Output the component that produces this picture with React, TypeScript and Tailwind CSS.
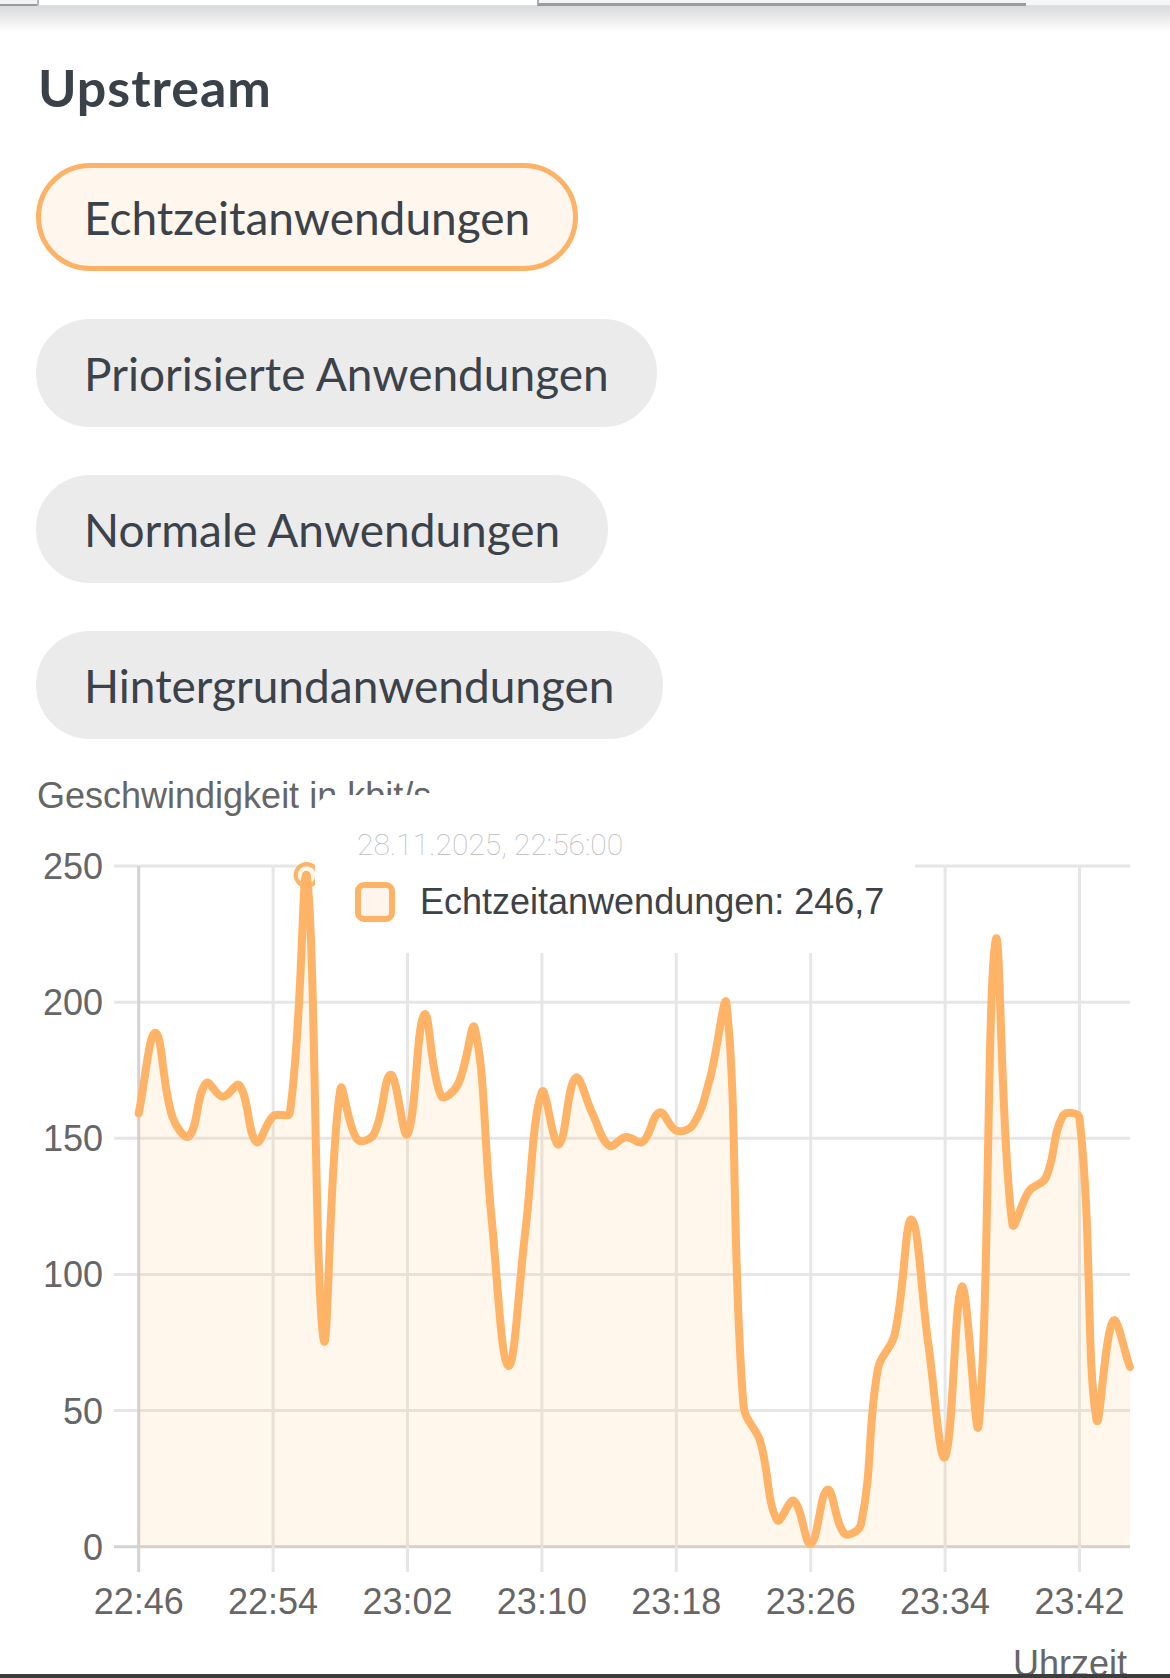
import React from "react";

const DATA = [
  159.2, 188.8, 158, 150.8, 170.2, 165.3, 169.4, 148.7, 158.1, 159.5,
  246.7, 76.3, 167.9, 149.7, 151.5, 173.3, 151.5, 195.5, 165.6, 169.8,
  190.4, 121, 66.4, 115, 167, 147.7, 172.2, 159.2, 147.3, 150.5,
  148.7, 159.5, 152.9, 155, 171.9, 198.9, 51.8, 38.6, 9.8, 16.8,
  1, 21, 4.9, 8.4, 65.3, 78, 120.1, 74.5, 33, 95.5,
  45, 222.5, 118.7, 130.7, 135.6, 158.1, 157.4, 47, 82.9, 66,
];

const X0 = 138.7;
const DX = 16.8;
const Y0 = 1546.7;
const KY = 2.7227;
const TOP = 866;
const RIGHT = 1130;
const ORANGE = "#ffb366";

type P = { x: number; y: number };

function buildPaths() {
  const pts: P[] = DATA.map((v, i) => ({ x: X0 + i * DX, y: Y0 - v * KY }));
  const clampY = (y: number) => Math.max(TOP, Math.min(Y0, y));
  const cps = pts.map((cur, i) => {
    const prev = pts[i - 1] ?? cur;
    const next = pts[i + 1] ?? cur;
    const d01 = Math.hypot(cur.x - prev.x, cur.y - prev.y);
    const d12 = Math.hypot(next.x - cur.x, next.y - cur.y);
    let s01 = d01 / (d01 + d12);
    let s12 = d12 / (d01 + d12);
    if (!isFinite(s01)) s01 = 0;
    if (!isFinite(s12)) s12 = 0;
    const fa = 0.4 * s01;
    const fb = 0.4 * s12;
    return {
      px: cur.x - fa * (next.x - prev.x),
      py: clampY(cur.y - fa * (next.y - prev.y)),
      nx: cur.x + fb * (next.x - prev.x),
      ny: clampY(cur.y + fb * (next.y - prev.y)),
    };
  });
  let d = `M${pts[0].x.toFixed(2)},${pts[0].y.toFixed(2)}`;
  for (let i = 1; i < pts.length; i++) {
    d += ` C${cps[i - 1].nx.toFixed(2)},${cps[i - 1].ny.toFixed(2)} ${cps[i].px.toFixed(2)},${cps[i].py.toFixed(2)} ${pts[i].x.toFixed(2)},${pts[i].y.toFixed(2)}`;
  }
  const last = pts[pts.length - 1];
  const fill = `${d} L${last.x.toFixed(2)},${Y0} L${pts[0].x.toFixed(2)},${Y0} Z`;
  return { line: d, fill };
}

const X_LABELS = ["22:46", "22:54", "23:02", "23:10", "23:18", "23:26", "23:34", "23:42"];
const Y_VALUES = [0, 50, 100, 150, 200, 250];

function Chart() {
  const { line, fill } = buildPaths();
  const hx = X0 + 10 * DX;
  const hy = Y0 - 246.7 * KY;
  return (
    <svg
      width={1170}
      height={914}
      viewBox="0 760 1170 914"
      className="block font-['Liberation_Sans',Arial,sans-serif]"
    >
      <text x={37} y={808} fontSize={36} fill="#666666">
        Geschwindigkeit in kbit/s
      </text>

      {Y_VALUES.map((v) => {
        const y = Y0 - v * KY;
        return (
          <g key={v}>
            <line
              x1={114}
              x2={RIGHT}
              y1={y}
              y2={y}
              stroke={v === 0 ? "#d2d2d2" : "#e6e6e6"}
              strokeWidth={3}
            />
            <text x={103} y={y + 13} fontSize={36} fill="#666666" textAnchor="end">
              {v}
            </text>
          </g>
        );
      })}

      {X_LABELS.map((l, k) => {
        const x = X0 + 134.4 * k;
        return (
          <g key={l}>
            <line
              x1={x}
              x2={x}
              y1={TOP}
              y2={1572}
              stroke={k === 0 ? "#d2d2d2" : "#e6e6e6"}
              strokeWidth={3}
            />
            <text x={x} y={1614} fontSize={36} fill="#666666" textAnchor="middle">
              {l}
            </text>
          </g>
        );
      })}

      <text x={1127} y={1676} fontSize={36} fill="#666666" textAnchor="end">
        Uhrzeit
      </text>

      <path d={fill} fill="rgba(255,179,102,0.12)" />
      <path d={line} fill="none" stroke={ORANGE} strokeWidth={8} strokeLinejoin="round" strokeLinecap="round" />
      <circle cx={hx} cy={hy} r={11} fill="rgba(255,179,102,0.12)" stroke={ORANGE} strokeWidth={4} />

      <rect x={315} y={795} width={600} height={158} rx={18} fill="#ffffff" />
      <text x={357} y={855} fontSize={30} fill="#bcbcbc" fontFamily="Roboto, sans-serif" fontWeight={100}>
        28.11.2025, 22:56:00
      </text>
      <rect x={358} y={885} width={34} height={34} rx={6} fill="#fff5ec" stroke={ORANGE} strokeWidth={6} />
      <text x={420} y={914} fontSize={36} fill="#3c4248">
        Echtzeitanwendungen: 246,7
      </text>
    </svg>
  );
}

const BUTTONS = [
  { label: "Echtzeitanwendungen", active: true },
  { label: "Priorisierte Anwendungen", active: false },
  { label: "Normale Anwendungen", active: false },
  { label: "Hintergrundanwendungen", active: false },
];

export default function App() {
  return (
    <div className="w-[1170px] h-[1678px] bg-white overflow-hidden flex flex-col">
      <div className="h-[6px] flex shrink-0">
        <div className="w-[37px] bg-[#f2f2f2] border-b-[2px] border-[#9a9a9a]" />
        <div className="w-[500px] bg-white border-l-[2px] border-b-[1px] border-l-[#b5b5b5] border-b-[#dedede]" />
        <div className="w-[489px] bg-[#f4f4f4] border-l-[2px] border-b-[3px] border-l-[#b0b0b0] border-b-[#9c9c9c]" />
        <div className="flex-1 bg-[#f6f6f6] border-b-[1px] border-[#e2e2e2]" />
      </div>
      <div className="h-[26px] shrink-0 bg-gradient-to-b from-[#d9dadc] to-white" />

      <h2 className="mt-[30px] ml-[38px] text-[52px] leading-[51px] tracking-[1px] font-bold text-[#3a4149] font-['Lato',sans-serif]">
        Upstream
      </h2>

      <div className="mt-[50px] ml-[36px] flex flex-col items-start gap-[48px] font-['Lato',sans-serif]">
        {BUTTONS.map((b) => (
          <div
            key={b.label}
            className={
              b.active
                ? "h-[108px] flex items-center px-[43px] rounded-full border-[5px] border-[#fdb266] bg-[#fff6ee] text-[46px] text-[#3b4249]"
                : "h-[108px] flex items-center px-[43px] rounded-full border-[5px] border-[#ebebeb] bg-[#ebebeb] text-[46px] text-[#3b4249]"
            }
          >
            {b.label}
          </div>
        ))}
      </div>

      <div className="mt-[21px] shrink-0">
        <Chart />
      </div>
      <div className="h-[4px] shrink-0 bg-[#3d3d3d]" />
    </div>
  );
}
